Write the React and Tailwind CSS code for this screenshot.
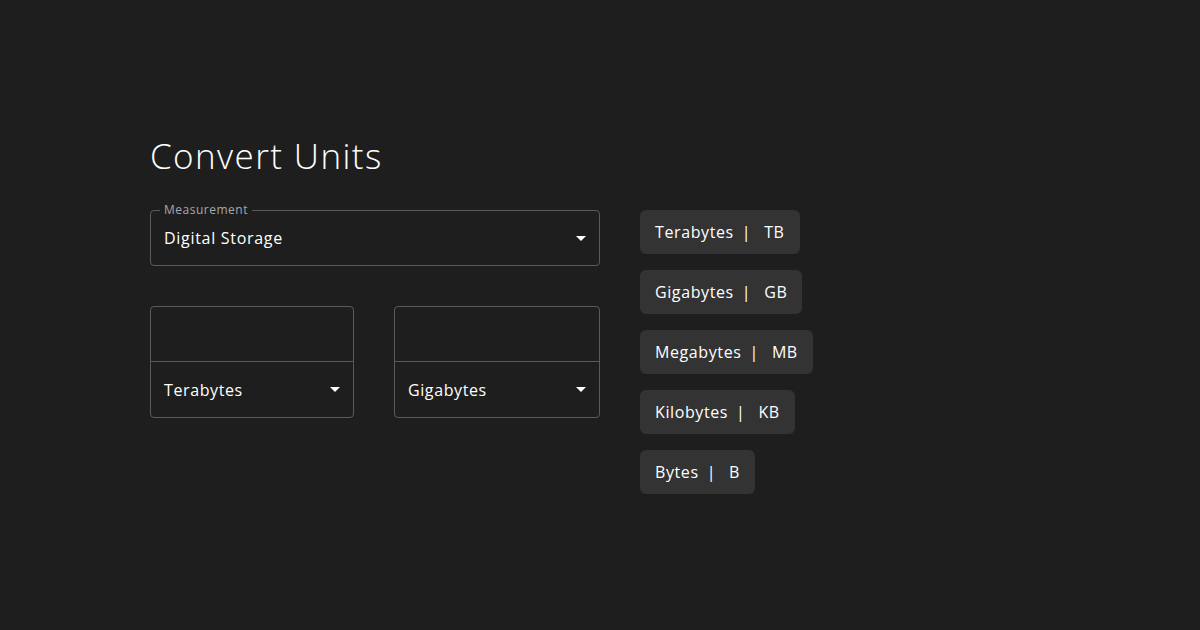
import React from "react";

const font = { fontFamily: '"Open Sans", "Liberation Sans", sans-serif' };

function Caret() {
  return (
    <svg width="10" height="5" viewBox="0 0 10 5" className="shrink-0">
      <path d="M0 0 L10 0 L5 5 Z" fill="#ffffff" />
    </svg>
  );
}

function Chip({ name, abbr }) {
  return (
    <div className="flex h-[44px] items-center rounded-md bg-[#333333] px-[15px] text-[16px] tracking-[0.6px] text-white">
      <span>{name}</span>
      <span className="ml-[8px] mr-[10px]">|</span>
      <span className="ml-[3px]">{abbr}</span>
    </div>
  );
}

function Converter({ unit, width }) {
  return (
    <div className={`flex flex-col rounded border border-[#5a5a5a] ${width}`}>
      <div className="h-[55px] border-b border-[#5a5a5a]" />
      <div className="flex h-[55px] items-center justify-between pl-[13px] pr-[13px] text-[16px] tracking-[0.6px] text-white">
        <span>{unit}</span>
        <Caret />
      </div>
    </div>
  );
}

export default function App() {
  return (
    <div className="min-h-[630px] w-full bg-[#1e1e1e] text-white" style={font}>
      <div className="pl-[150px] pt-[134px]">
        <h1 className="text-[35px] font-light leading-[44px] tracking-[1.4px] text-white">Convert Units</h1>
        <div className="mt-[32px] flex gap-[40px]">
          <div className="flex w-[450px] flex-col gap-[40px]">
            <div className="relative flex h-[56px] items-center justify-between rounded border border-[#5a5a5a] pl-[13px] pr-[13px]">
              <span className="absolute -top-[9px] left-[9px] bg-[#1e1e1e] px-[4px] text-[12px] leading-[16px] tracking-[0.5px] text-[#a8a8a8]">
                Measurement
              </span>
              <span className="text-[16px] tracking-[0.7px] text-white">Digital Storage</span>
              <Caret />
            </div>
            <div className="flex gap-[40px]">
              <Converter unit="Terabytes" width="w-[204px]" />
              <Converter unit="Gigabytes" width="w-[206px]" />
            </div>
          </div>
          <div className="flex flex-col items-start gap-[16px]">
            <Chip name="Terabytes" abbr="TB" />
            <Chip name="Gigabytes" abbr="GB" />
            <Chip name="Megabytes" abbr="MB" />
            <Chip name="Kilobytes" abbr="KB" />
            <Chip name="Bytes" abbr="B" />
          </div>
        </div>
      </div>
    </div>
  );
}
